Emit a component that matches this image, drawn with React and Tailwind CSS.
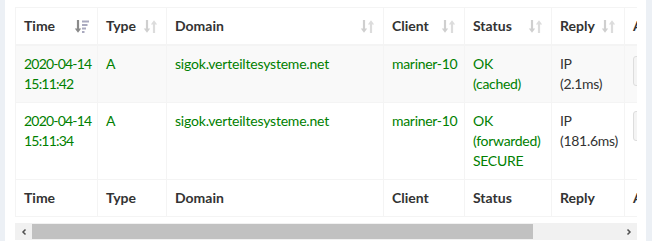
import React from 'react';

const rows = [
  { time: ['2020-04-14', '15:11:42'], type: 'A', domain: 'sigok.verteiltesysteme.net', client: 'mariner-10', status: ['OK', '(cached)'], reply: ['IP', '(2.1ms)'], striped: true },
  { time: ['2020-04-14', '15:11:34'], type: 'A', domain: 'sigok.verteiltesysteme.net', client: 'mariner-10', status: ['OK', '(forwarded)', 'SECURE'], reply: ['IP', '(181.6ms)'], striped: false },
];

function SortBoth() {
  return (
    <svg width="15" height="15" viewBox="0 0 15 15" className="shrink-0">
      <path d="M4 1v11" stroke="#cfcfcf" strokeWidth="2.2" />
      <path d="M0.8 9.5L4 13.8L7.2 9.5z" fill="#cfcfcf" />
      <path d="M11 14V3" stroke="#dcdcdc" strokeWidth="2.2" />
      <path d="M7.8 5.5L11 1.2L14.2 5.5z" fill="#dcdcdc" />
    </svg>
  );
}

function SortDesc() {
  return (
    <svg width="15" height="15" viewBox="0 0 15 15" className="shrink-0">
      <path d="M4 1v11" stroke="#8a8a8a" strokeWidth="2.2" />
      <path d="M0.8 9.5L4 13.8L7.2 9.5z" fill="#8a8a8a" />
      <rect x="8" y="1.5" width="7" height="2" fill="#a9a9bf" />
      <rect x="8" y="5" width="5.5" height="2" fill="#a9a9bf" />
      <rect x="8" y="8.5" width="4" height="2" fill="#a9a9bf" />
      <rect x="8" y="12" width="2.5" height="2" fill="#a9a9bf" />
    </svg>
  );
}

const cols = [
  { name: 'Time', w: 'w-[82px]', icon: 'desc' },
  { name: 'Type', w: 'w-[69px]', icon: 'both' },
  { name: 'Domain', w: 'w-[217px]', icon: 'both' },
  { name: 'Client', w: 'w-[81px]', icon: 'both' },
  { name: 'Status', w: 'w-[87px]', icon: 'both' },
  { name: 'Reply', w: 'w-[73px]', icon: 'both' },
  { name: 'Action', w: 'w-[80px]', icon: null },
];

function Lines({ items }) {
  return items.map((t, i) => <div key={i}>{t}</div>);
}

export default function App() {
  const td = 'border border-[#f4f4f4] px-2 py-2 align-top';
  return (
    <div className="h-[241px] overflow-hidden bg-[#ecf0f5] pl-[5px] pr-[6px] font-['Source_Sans_Pro','Lato',sans-serif] text-[14px] leading-[20px] text-[#333]">
      <div className="h-full bg-white pl-[10px] pr-[9px] pt-[7px]">
        <div className="overflow-hidden">
          <table className="table-fixed border-collapse w-[689px] mb-[6px]">
            <colgroup>
              {cols.map((c) => <col key={c.name} className={c.w} />)}
            </colgroup>
            <thead>
              <tr>
                {cols.map((c) => (
                  <th key={c.name} className="border border-[#f4f4f4] border-b-2 px-2 py-2 text-left font-bold whitespace-nowrap">
                    <div className="flex items-center justify-between">
                      <span>{c.name}</span>
                      {c.icon === 'desc' && <SortDesc />}
                      {c.icon === 'both' && <SortBoth />}
                    </div>
                  </th>
                ))}
              </tr>
            </thead>
            <tbody>
              {rows.map((r, i) => (
                <tr key={i} className={r.striped ? 'bg-[#f9f9f9]' : 'bg-white'}>
                  <td className={td + ' text-[#008000] whitespace-nowrap tracking-[-0.8px]'}><Lines items={r.time} /></td>
                  <td className={td + ' text-[#008000]'}>{r.type}</td>
                  <td className={td + ' text-[#008000] tracking-[-0.2px]'}>{r.domain}</td>
                  <td className={td + ' text-[#008000] whitespace-nowrap tracking-[-0.3px]'}>{r.client}</td>
                  <td className={td + ' text-[#008000] whitespace-nowrap tracking-[-0.3px]'}><Lines items={r.status} /></td>
                  <td className={td + ' whitespace-nowrap tracking-[-0.3px]'}><Lines items={r.reply} /></td>
                  <td className={td}>
                    <div className={r.striped ? 'flex h-[40px] items-start pt-[2px]' : 'flex items-start'}>
                      <button className="h-[30px] w-[70px] rounded-[3px] border border-[#ddd] bg-[#f4f4f4] text-[12px] text-[#444]">
                        Blacklist
                      </button>
                    </div>
                  </td>
                </tr>
              ))}
            </tbody>
            <tfoot>
              <tr>
                {cols.map((c) => (
                  <th key={c.name} className="border border-[#f4f4f4] px-2 py-2 text-left font-bold whitespace-nowrap">
                    {c.name}
                  </th>
                ))}
              </tr>
            </tfoot>
          </table>
        </div>
        <div className="flex h-[17px] bg-[#f1f1f1]">
          <div className="flex w-[17px] items-center justify-center text-[#505050]">
            <svg width="8" height="8" viewBox="0 0 8 8"><path d="M5.5 1.5L3 4l2.5 2.5" stroke="#505050" strokeWidth="1.5" fill="none" /></svg>
          </div>
          <div className="my-[1px] w-[501px] bg-[#c1c1c1]" />
          <div className="flex-1" />
          <div className="flex w-[17px] items-center justify-center">
            <svg width="8" height="8" viewBox="0 0 8 8"><path d="M2.5 1.5L5 4 2.5 6.5" stroke="#505050" strokeWidth="1.5" fill="none" /></svg>
          </div>
        </div>
      </div>
    </div>
  );
}
